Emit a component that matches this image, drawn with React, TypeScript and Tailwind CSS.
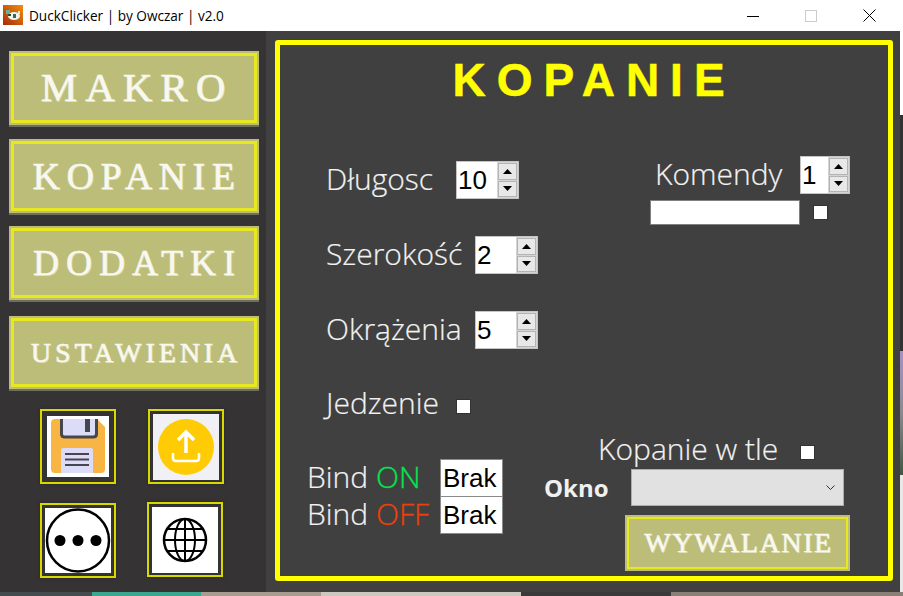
import React from "react";

const seg = "font-['Open_Sans',sans-serif] font-light text-[30px] text-[#f2f2f2] leading-none whitespace-nowrap [-webkit-text-stroke:0.2px_#f2f2f2]";

function NavButton({ label, size, spacing, mt, h = "h-[76px]" }: { label: string; size: string; spacing: string; mt: string; h?: string }) {
  return (
    <div className={`${h} ${mt} w-[250px] p-[2px] bg-[#bdbd7a] border-b-2 border-[#6e6e5c]`}>
      <div className={`h-full w-full border-[3px] border-[#e8e820] flex items-center justify-center font-['Liberation_Serif',serif] text-[#f8f8f0] [-webkit-text-stroke:0.5px_#f8f8f0] [text-shadow:1px_1px_0_#d8d8a8] ${size} ${spacing}`}>
        {label}
      </div>
    </div>
  );
}

function Spinner({ value, w }: { value: string; w: string }) {
  return (
    <div className={`${w} h-[38px] flex bg-white border border-[#c4c4c4]`}>
      <div className="flex-1 flex items-center pl-[1px] font-['Liberation_Sans',sans-serif] text-[26px] text-black leading-none">{value}</div>
      <div className="w-[21px] flex flex-col bg-[#d4d4d4] p-[1px] gap-[1px]">
        <div className="flex-1 bg-[#e8e8e8] border border-[#b4b4b4] flex items-center justify-center">
          <svg width="9" height="5" viewBox="0 0 9 5"><path d="M4.5 0L9 5H0z" fill="#000" /></svg>
        </div>
        <div className="flex-1 bg-[#e8e8e8] border border-[#b4b4b4] flex items-center justify-center">
          <svg width="9" height="5" viewBox="0 0 9 5"><path d="M0 0H9L4.5 5z" fill="#000" /></svg>
        </div>
      </div>
    </div>
  );
}

const Check = ({ className = "" }: { className?: string }) => (
  <div className={`w-[15px] h-[15px] bg-white border border-[#333] ${className}`} />
);

function IconBox({ children, white }: { children: React.ReactNode; white: string }) {
  return (
    <div className="w-[76px] h-[75px] border-[2px] border-[#d8d800] bg-[#333] flex items-center justify-center shadow-[0_0_3px_#2a2a2a]">
      <div className={`${white} flex items-center justify-center`}>{children}</div>
    </div>
  );
}

function BrakRow({ children }: { children: React.ReactNode }) {
  return (
    <div className="flex items-center h-[37px]">
      <div className={`w-[133px] -mt-[2px] ${seg}`}>{children}</div>
      <div className="w-[63px] h-[38px] bg-white border border-[#8a8a8a] flex items-center pl-[2px] font-['Liberation_Sans',sans-serif] text-[26px] text-black leading-none">Brak</div>
    </div>
  );
}

export default function App() {
  return (
    <div className="w-[903px] h-[596px] overflow-hidden bg-[#444] flex flex-col">
      <div className="flex h-[592px]">
        <div className="w-[900px] h-[592px] flex flex-col">
          {/* title bar */}
          <div className="h-[31px] bg-white flex items-center relative">
            <svg className="ml-[3px] mt-[-1px]" width="20" height="20" viewBox="0 0 20 20">
              <defs>
                <linearGradient id="fav" x1="0" y1="1" x2="1" y2="0">
                  <stop offset="0" stopColor="#a82a08" />
                  <stop offset="1" stopColor="#f09010" />
                </linearGradient>
              </defs>
              <rect width="20" height="20" fill="url(#fav)" />
              <ellipse cx="11" cy="11" rx="6" ry="4" fill="#eef4ee" />
              <rect x="3" y="5" width="4" height="4" fill="#5cb890" />
              <rect x="5" y="9" width="3" height="2" fill="#2a4a3a" />
              <rect x="10" y="9" width="3" height="4" fill="#3a6a50" />
              <rect x="15" y="6" width="2" height="3" fill="#dfe8d0" />
            </svg>
            <span className="ml-[6px] font-['Open_Sans',sans-serif] text-[13.6px] text-black leading-none whitespace-nowrap">DuckClicker | by Owczar | v2.0</span>
            <div className="ml-auto flex items-center h-full">
              <div className="w-[58px] flex justify-center"><svg width="12" height="12" viewBox="0 0 12 12"><path d="M0 6.5H12" stroke="#000" /></svg></div>
              <div className="w-[58px] flex justify-center"><svg width="12" height="12" viewBox="0 0 12 12"><rect x="0.5" y="0.5" width="11" height="11" fill="none" stroke="#ccc" /></svg></div>
              <div className="w-[58px] flex justify-center mr-[2px]"><svg width="13" height="13" viewBox="0 0 13 13"><path d="M0.5 0.5L12.5 12.5M12.5 0.5L0.5 12.5" stroke="#000" /></svg></div>
            </div>
          </div>

          <div className="flex-1 flex bg-[#404040]">
            {/* sidebar */}
            <div className="w-[266px] bg-[#353333] flex flex-col pl-[9px] pt-[20px]">
              <NavButton label="MAKRO" size="text-[41px]" spacing="tracking-[8px] pl-[6px]" mt="" />
              <NavButton label="KOPANIE" size="text-[38px]" spacing="tracking-[6.5px] pl-[6px]" mt="mt-[12px]" />
              <NavButton label="DODATKI" size="text-[36px]" spacing="tracking-[7px] pl-[7px]" mt="mt-[11px]" />
              <NavButton label="USTAWIENIA" size="text-[28px]" spacing="tracking-[3.9px] pl-[4px]" mt="mt-[14px]" h="h-[75px]" />
              <div className="grid grid-cols-[76px_76px] gap-x-[32px] gap-y-[19px] ml-[31px] mt-[18px]">
                <IconBox white="w-[62px] h-[61px] bg-white">
                  <svg width="62" height="61" viewBox="0 0 62 61">
                    <path d="M8 3H50L58 11V53Q58 57 54 57H8Q4 57 4 53V7Q4 3 8 3Z" fill="#f8b544" />
                    <path d="M14.500 3V18Q14.500 21 18 21H46Q49.500 21 49.500 18V3" fill="#dcdcf8" stroke="#46464e" strokeWidth="3" />
                    <rect x="38" y="3" width="5" height="13" fill="#46464e" />
                    <path d="M17 32H44Q46 32 46 34V57H14V34Q14 32 17 32Z" fill="#dcdcf8" />
                    <path d="M18 38H42M18 43.500H42M18 49H42" stroke="#46464e" strokeWidth="2" />
                  </svg>
                </IconBox>
                <IconBox white="w-[66px] h-[66px] bg-[#f0f0f5]">
                  <svg width="66" height="66" viewBox="0 0 66 66">
                    <circle cx="33" cy="33" r="28" fill="#ffcb05" />
                    <path d="M33 39V19M25 26L33 18L41 26" fill="none" stroke="#fff" strokeWidth="3.500" />
                    <path d="M20 39V44Q20 47 23 47H43Q46 47 46 44V39" fill="none" stroke="#fff" strokeWidth="2.500" />
                  </svg>
                </IconBox>
                <IconBox white="w-[66px] h-[65px] bg-white">
                  <svg width="66" height="65" viewBox="0 0 66 65">
                    <circle cx="33" cy="32.500" r="31" fill="none" stroke="#000" strokeWidth="2.500" />
                    <circle cx="15" cy="32.500" r="5.500" fill="#000" />
                    <circle cx="33" cy="32.500" r="5.500" fill="#000" />
                    <circle cx="51" cy="32.500" r="5.500" fill="#000" />
                  </svg>
                </IconBox>
                <div className="-ml-[1px] -mt-[1px]">
                  <IconBox white="w-[66px] h-[66px] bg-white">
                    <svg width="66" height="66" viewBox="0 0 66 66" fill="none" stroke="#000" strokeWidth="2">
                      <circle cx="33" cy="33" r="21" strokeWidth="2.500" />
                      <ellipse cx="33" cy="33" rx="10" ry="21" />
                      <path d="M33 12V54M12 33H54M15 22H51M15 44H51" />
                    </svg>
                  </IconBox>
                </div>
              </div>
            </div>

            {/* panel */}
            <div className="flex-1 pl-[9px] pr-[7px] pt-[9px] pb-[11px]">
              <div className="h-full border-[5px] border-[#ffff00] rounded-[3px] flex flex-col">
                <div className="h-[70px] pl-[20px] flex items-center justify-center font-['Liberation_Sans',sans-serif] font-bold text-[46px] tracking-[11px] text-[#ffff00] leading-none [-webkit-text-stroke:0.5px_#ffff00]">KOPANIE</div>
                <div className="flex flex-1">
                  <div className="w-[260px] flex flex-col pt-[46px]">
                    <div className="flex items-center pl-[46px] h-[38px]">
                      <div className={`w-[130px] -mt-[2px] ${seg}`}>Długosc</div>
                      <Spinner value="10" w="w-[63px]" />
                    </div>
                    <div className="flex items-center pl-[46px] h-[38px] mt-[37px]">
                      <div className={`w-[149px] -mt-[2px] ${seg}`}>Szerokość</div>
                      <Spinner value="2" w="w-[63px]" />
                    </div>
                    <div className="flex items-center pl-[46px] h-[38px] mt-[37px]">
                      <div className={`w-[149px] -mt-[2px] ${seg}`}>Okrążenia</div>
                      <Spinner value="5" w="w-[63px]" />
                    </div>
                    <div className="flex items-center pl-[46px] h-[38px] mt-[36px]">
                      <div className={`w-[131px] -mt-[2px] ${seg}`}>Jedzenie</div>
                      <Check className="mt-[5px] -ml-[1px]" />
                    </div>
                    <div className="flex flex-col pl-[27px] mt-[36px]">
                      <BrakRow>Bind <span className="text-[#00e64d] [-webkit-text-stroke:0.3px_#00e64d]">ON</span></BrakRow>
                      <BrakRow>Bind <span className="text-[#ee3f0a] [-webkit-text-stroke:0.3px_#ee3f0a]">OFF</span></BrakRow>
                    </div>
                  </div>
                  <div className="flex-1 flex flex-col pt-[41px]">
                    <div className="flex items-center pl-[115px] h-[38px]">
                      <div className={`w-[145px] -mt-[2px] ${seg}`}>Komendy</div>
                      <Spinner value="1" w="w-[50px]" />
                    </div>
                    <div className="flex items-center pl-[110px] h-[25px] mt-[6px]">
                      <div className="w-[150px] h-[25px] bg-white border border-[#808080]" />
                      <Check className="ml-[13px]" />
                    </div>
                    <div className="flex items-center pl-[58px] h-[38px] mt-[206px]">
                      <div className={`w-[202px] -mt-[2px] ${seg}`}>Kopanie w tle</div>
                      <Check className="mt-[4px]" />
                    </div>
                    <div className="flex items-center pl-[4px] h-[37px]">
                      <div className="w-[87px] font-['Open_Sans',sans-serif] font-bold text-[24px] text-[#f0f0f0] leading-none">Okno</div>
                      <div className="w-[213px] h-[37px] bg-[#e1e1e1] border border-[#adadad] flex items-center justify-end pr-[8px]">
                        <svg width="9" height="5" viewBox="0 0 9 5"><path d="M0.500 0.500L4.500 4.500L8.500 0.500" fill="none" stroke="#333" /></svg>
                      </div>
                    </div>
                    <div className="ml-[85px] mt-[9px] w-[225px] h-[56px] p-[2px] bg-[#bdbd7a]">
                      <div className="h-full border-[2px] border-[#e8e820] pl-[2px] flex items-center justify-center font-['Liberation_Serif',serif] text-[28px] tracking-[1.6px] text-[#f8f8f0] [-webkit-text-stroke:0.5px_#f8f8f0] [text-shadow:1px_1px_0_#d8d8a8]">WYWALANIE</div>
                    </div>
                  </div>
                </div>
              </div>
            </div>
          </div>
        </div>
        {/* background peeking through on the right */}
        <div className="w-[3px] flex flex-col">
          <div className="h-[115px] bg-white" />
          <div className="h-[236px] bg-[#333]" />
          <div className="h-[124px] bg-gradient-to-b from-[#a890c8] via-[#8a8a90] to-[#3e5a40]" />
          <div className="flex-1 bg-[#e8e8e8]" />
        </div>
      </div>
      {/* background peeking through at the bottom */}
      <div className="h-[4px] flex">
        <div className="w-[92px] bg-[#444c50]" />
        <div className="w-[109px] bg-[#3aa890]" />
        <div className="w-[120px] bg-[#a89c90]" />
        <div className="w-[200px] bg-[#ccc8c0]" />
        <div className="w-[150px] bg-[#3a3a3a]" />
        <div className="flex-1 bg-[#8a8078]" />
      </div>
    </div>
  );
}
